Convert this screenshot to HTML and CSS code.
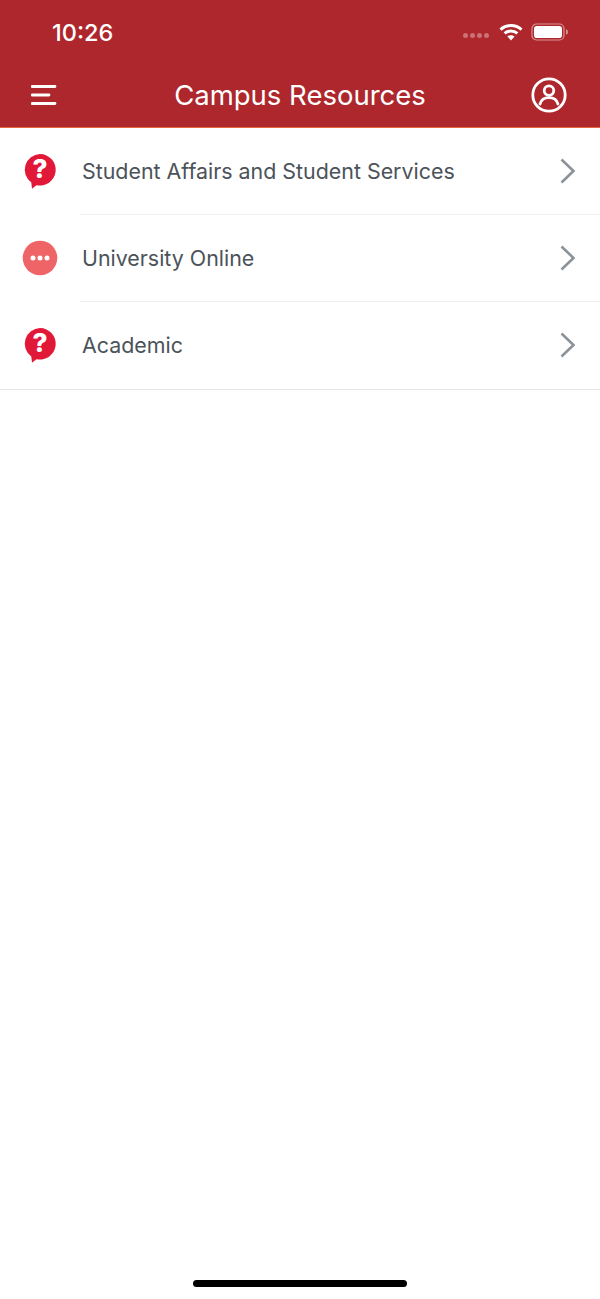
FILE: index.html
```html
<!DOCTYPE html>
<html lang="en">
<head>
<meta charset="utf-8">
<title>Campus Resources</title>
<link rel="stylesheet" href="styles.css">
</head>
<body>
<div class="screen">
  <header class="header">
    <div class="status">
      <span class="time">10:26</span>
      <div class="status-icons">
        <span class="signal"><i></i><i></i><i></i><i></i></span>
        <svg class="wifi" width="24" height="18" viewBox="0 0 24 18"><path d="M1.500 6.600C7.400 1.200 16.600 1.200 22.500 6.600" fill="none" stroke="#fff" stroke-width="3"/><path d="M5.600 10.400C9.300 7.200 14.700 7.200 18.400 10.400" fill="none" stroke="#fff" stroke-width="3"/><path d="M12 17.400L8.400 13.400C10.400 11.900 13.600 11.900 15.600 13.400Z" fill="#fff"/></svg>
        <svg class="battery" width="38" height="18" viewBox="0 0 38 18"><rect x="1" y="1" width="32" height="16" rx="4.500" fill="none" stroke="#fff" stroke-opacity=".5" stroke-width="1.200"/><rect x="3" y="3" width="28" height="12" rx="2.800" fill="#fff"/><path d="M35 6.200c1.300.4 2 1.500 2 2.800s-.7 2.400-2 2.800z" fill="#fff" fill-opacity=".5"/></svg>
      </div>
    </div>
    <nav class="nav">
      <svg class="menu" width="26" height="22" viewBox="0 0 26 22"><path d="M1 2.500H24M1 11H18M1 19.500H24" stroke="#fff" stroke-width="2.800" stroke-linecap="round" fill="none"/></svg>
      <h1 class="title">Campus Resources</h1>
      <svg class="user" width="36" height="36" viewBox="0 0 36 36" fill="none" stroke="#fff" stroke-width="2.800"><circle cx="18" cy="18" r="16.200"/><circle cx="18" cy="13.600" r="4.800"/><path d="M9 27c1.200-4.300 4.800-6.400 9-6.400s7.800 2.100 9 6.400" stroke-linecap="round"/></svg>
    </nav>
  </header>
  <ul class="list">
    <li class="row">
      <span class="badge"><svg width="36" height="38" viewBox="0 0 36 38"><path d="M18 2a15.800 15.800 0 1 1-3.600 31.200L10 36.800l-.7-6.200A15.800 15.800 0 0 1 18 2z" fill="#e21839"/><text x="18" y="26" class="mark">?</text></svg></span>
      <span class="label">Student Affairs and Student Services</span>
      <svg class="chev" width="18" height="28" viewBox="0 0 18 28"><path d="M2.500 2.500L14.500 14L2.500 25.500" fill="none" stroke="#8b9399" stroke-width="2.600"/></svg>
    </li>
    <li class="row">
      <span class="badge"><svg width="36" height="38" viewBox="0 0 36 38"><circle cx="18" cy="19" r="17.300" fill="#ef6567"/><circle cx="11" cy="19" r="2.500" fill="#fff"/><circle cx="18" cy="19" r="2.500" fill="#fff"/><circle cx="25" cy="19" r="2.500" fill="#fff"/></svg></span>
      <span class="label">University Online</span>
      <svg class="chev" width="18" height="28" viewBox="0 0 18 28"><path d="M2.500 2.500L14.500 14L2.500 25.500" fill="none" stroke="#8b9399" stroke-width="2.600"/></svg>
    </li>
    <li class="row">
      <span class="badge"><svg width="36" height="38" viewBox="0 0 36 38"><path d="M18 2a15.800 15.800 0 1 1-3.600 31.200L10 36.800l-.7-6.200A15.800 15.800 0 0 1 18 2z" fill="#e21839"/><text x="18" y="26" class="mark">?</text></svg></span>
      <span class="label">Academic</span>
      <svg class="chev" width="18" height="28" viewBox="0 0 18 28"><path d="M2.500 2.500L14.500 14L2.500 25.500" fill="none" stroke="#8b9399" stroke-width="2.600"/></svg>
    </li>
  </ul>
  <div class="home-bar"></div>
</div>
</body>
</html>
```

FILE: styles.css
```css
* { box-sizing: border-box; }
html, body { margin: 0; padding: 0; }
body { background: #fff; font-family: Inter, Roboto, "Liberation Sans", sans-serif; }
.screen { width: 600px; height: 1299px; display: flex; flex-direction: column; background: #fff; }
.header { height: 128px; background: #ae272d; border-bottom: 1px solid #e8653f; flex: none; }
.status { height: 70px; display: flex; justify-content: space-between; align-items: flex-start; padding: 19px 31px 0 52px; }
.time { color: #fff; font-size: 23.500px; line-height: 28px; font-weight: 500; }
.status-icons { display: flex; align-items: center; gap: 8px; padding-top: 4px; }
.signal { display: flex; gap: 2px; margin-right: 2px; padding-top: 7px; }
.signal i { width: 5px; height: 5px; border-radius: 50%; background: #fff; opacity: .35; }
.nav { height: 57px; display: grid; grid-template-columns: 1fr auto 1fr; align-items: center; padding: 0 32px 8px 32px; }
.menu { justify-self: start; margin-left: -1px; }
.user { justify-self: end; margin-right: 1px; }
.title { margin: 0; color: #fff; font-size: 27.500px; font-weight: 400; line-height: 36px; }
.list { list-style: none; margin: 0; padding: 0; border-bottom: 1px solid #e2e4e6; }
.row { height: 87px; display: flex; align-items: center; padding: 0 23px 2px 0; position: relative; }
.row + .row::before { content: ""; position: absolute; left: 80px; right: 0; top: -1px; height: 1px; background: #eeeff0; }
.badge { width: 82px; flex: none; padding-left: 22px; display: flex; }
.mark { fill: #fff; font-size: 26px; font-weight: 800; text-anchor: middle; }
.label { flex: 1; color: #4b5359; font-size: 21.400px; line-height: 30px; }
.chev { flex: none; }
.home-bar { width: 214px; height: 7px; border-radius: 4px; background: #000; margin: auto auto 12px; }
```
